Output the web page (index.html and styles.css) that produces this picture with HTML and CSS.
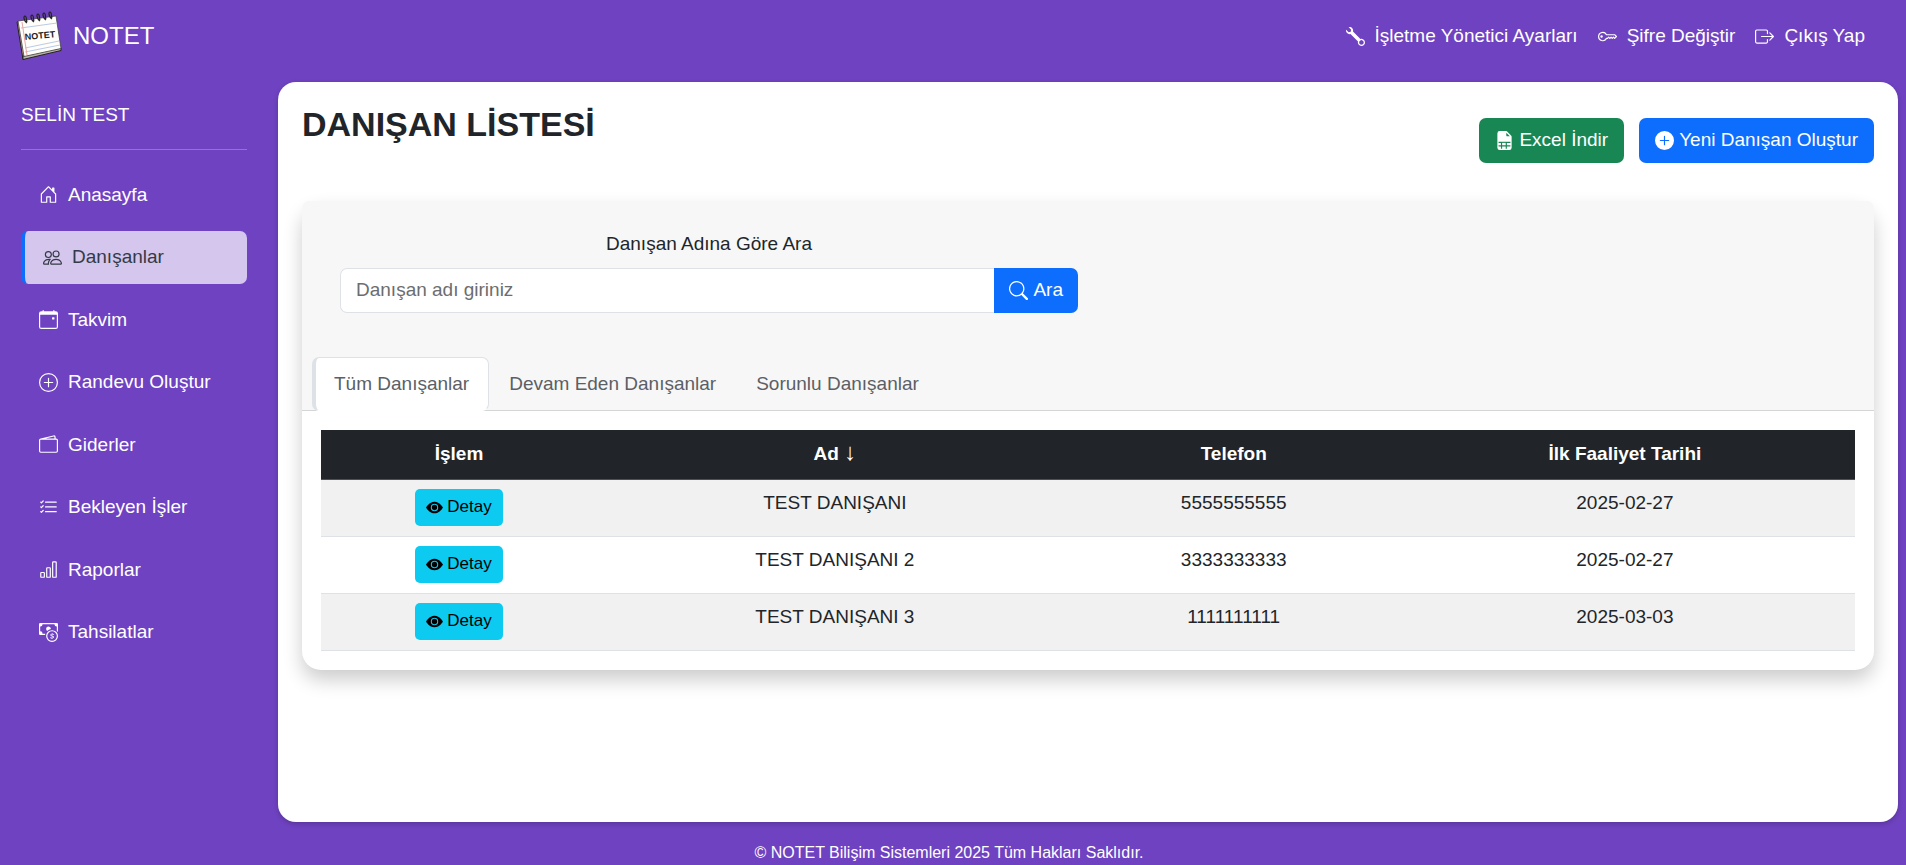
FILE: index.html
```html
<!DOCTYPE html>
<html lang="tr">
<head>
<meta charset="utf-8">
<meta name="viewport" content="width=device-width, initial-scale=1">
<title>NOTET - Danışan Listesi</title>
<link rel="stylesheet" href="styles.css">
</head>
<body>
<svg class="sprite" aria-hidden="true">
  <symbol id="eye" viewBox="0 0 16 16"><path d="M10.5 8a2.500 2.500 0 1 1-5 0 2.500 2.500 0 0 1 5 0"/><path d="M0 8s3-5.500 8-5.500S16 8 16 8s-3 5.500-8 5.500S0 8 0 8m8 3.500a3.500 3.500 0 1 0 0-7 3.500 3.500 0 0 0 0 7"/></symbol>
</svg>
<header class="topbar">
  <a class="brand" href="#">
    <svg class="logo" viewBox="0 0 48 50" aria-hidden="true">
      <path d="M2 11 8 48.500 11 47 6 11z" fill="#c9a08c" stroke="#222" stroke-width="1"/>
      <path d="M8 48.500 46 39.500 46 37 8 45z" fill="#b9b3a6" stroke="#222" stroke-width="1"/>
      <path d="M3 10 41 5 46 37.500 9 45.500z" fill="#fffefa" stroke="#444" stroke-width=".8"/>
      <path d="M6 17 42 12M10 37 44 30M10 41 45 34" stroke="#b9cbe8" stroke-width="1" fill="none"/>
      <path d="M7 11 12 44" stroke="#e7a6a6" stroke-width="1" fill="none"/>
      <path d="M12 11c-3-2-4-7-2-7s1 4 2 6M19 10c-3-2-4-7-2-7s1 4 2 6M25 9c-3-2-4-7-2-7s1 4 2 6M31 8c-3-2-4-7-2-7s1 4 2 6M37 7c-3-2-4-7-2-7s1 4 2 6" transform="translate(0 1)" fill="none" stroke="#222" stroke-width="1.200"/>
      <text class="logo-text" x="10" y="29" transform="rotate(-5 10 29)">NOTET</text>
    </svg>
    <span>NOTET</span>
  </a>
  <nav class="toplinks" aria-label="Hesap">
    <a href="#"><svg class="icon" viewBox="0 0 16 16"><path d="M.102 2.223A3.004 3.004 0 0 0 3.780 5.897l6.341 6.252A3.003 3.003 0 0 0 13 16a3 3 0 1 0-.851-5.878L5.897 3.781A3.004 3.004 0 0 0 2.223.1l2.141 2.142L4 4l-1.757.364zm13.370 9.019.528.026.287.445.445.287.026.529L15 13l-.242.471-.026.529-.445.287-.287.445-.529.026L13 15l-.471-.242-.529-.026-.287-.445-.445-.287-.026-.529L11 13l.242-.471.026-.529.445-.287.287-.445.529-.026L13 11z"/></svg>İşletme Yönetici Ayarları</a>
    <a href="#"><svg class="icon" viewBox="0 0 16 16"><path d="M0 8a4 4 0 0 1 7.465-2H14a.5.5 0 0 1 .354.146l1.500 1.500a.5.5 0 0 1 0 .708l-1.500 1.500a.5.5 0 0 1-.708 0L13 9.207l-.646.647a.5.5 0 0 1-.708 0L11 9.207l-.646.647a.5.5 0 0 1-.708 0L9 9.207l-.646.647A.5.5 0 0 1 8 10h-.535A4 4 0 0 1 0 8m4-3a3 3 0 1 0 2.712 4.285A.5.5 0 0 1 7.163 9h.63l.853-.854a.5.5 0 0 1 .708 0l.646.647.646-.647a.5.5 0 0 1 .708 0l.646.647.646-.647a.5.5 0 0 1 .708 0l.646.647.793-.793-1-1h-6.630a.5.5 0 0 1-.451-.285A3 3 0 0 0 4 5"/><path d="M4 8a1 1 0 1 1-2 0 1 1 0 0 1 2 0"/></svg>Şifre Değiştir</a>
    <a href="#"><svg class="icon" viewBox="0 0 16 16"><path d="M10 12.500a.5.5 0 0 1-.5.5h-8a.5.5 0 0 1-.5-.5v-9a.5.5 0 0 1 .5-.5h8a.5.5 0 0 1 .5.5v2a.5.5 0 0 0 1 0v-2A1.500 1.500 0 0 0 9.500 2h-8A1.500 1.500 0 0 0 0 3.500v9A1.500 1.500 0 0 0 1.500 14h8a1.500 1.500 0 0 0 1.500-1.500v-2a.5.5 0 0 0-1 0z"/><path d="M15.854 8.354a.5.5 0 0 0 0-.708l-3-3a.5.5 0 0 0-.708.708L14.293 7.500H5.500a.5.5 0 0 0 0 1h8.793l-2.147 2.146a.5.5 0 0 0 .708.708z"/></svg>Çıkış Yap</a>
  </nav>
</header>

<div class="layout">
  <aside class="sidebar">
    <div class="user">SELİN TEST</div>
    <nav class="menu" aria-label="Ana menü">
      <a href="#"><svg class="icon" viewBox="0 0 16 16"><path d="M8.354 1.146a.5.5 0 0 0-.708 0l-6 6A.5.5 0 0 0 1.500 7.500v7a.5.5 0 0 0 .5.5h4.500a.5.5 0 0 0 .5-.5v-4h2v4a.5.5 0 0 0 .5.5H14a.5.5 0 0 0 .5-.5v-7a.5.5 0 0 0-.146-.354L13 5.793V2.500a.5.5 0 0 0-.5-.5h-1a.5.5 0 0 0-.5.5v1.293zM2.500 14V7.707l5.500-5.500 5.500 5.500V14H10v-4a.5.5 0 0 0-.5-.5h-3a.5.5 0 0 0-.5.5v4z"/></svg>Anasayfa</a>
      <a class="active" href="#" aria-current="page"><svg class="icon" viewBox="0 0 16 16"><path d="M15 14s1 0 1-1-1-4-5-4-5 3-5 4 1 1 1 1zm-7.978-1L7 12.996c.001-.264.167-1.030.76-1.720C8.312 10.629 9.282 10 11 10c1.717 0 2.687.63 3.240 1.276.593.69.758 1.457.76 1.720l-.008.002-.014.002zM11 7a2 2 0 1 0 0-4 2 2 0 0 0 0 4m3-2a3 3 0 1 1-6 0 3 3 0 0 1 6 0M6.936 9.280a6 6 0 0 0-1.230-.247A7 7 0 0 0 5 9c-4 0-5 3-5 4q0 1 1 1h4.216A2.240 2.240 0 0 1 5 13c0-1.010.377-2.042 1.090-2.904.243-.294.526-.569.846-.816M4.920 10A5.500 5.500 0 0 0 4 13H1c0-.26.164-1.030.76-1.724.545-.636 1.492-1.256 3.160-1.275ZM1.500 5.500a3 3 0 1 1 6 0 3 3 0 0 1-6 0m3-2a2 2 0 1 0 0 4 2 2 0 0 0 0-4"/></svg>Danışanlar</a>
      <a href="#"><svg class="icon" viewBox="0 0 16 16"><path d="M11 6.500a.5.5 0 0 1 .5-.5h1a.5.5 0 0 1 .5.5v1a.5.5 0 0 1-.5.5h-1a.5.5 0 0 1-.5-.5z"/><path d="M3.500 0a.5.5 0 0 1 .5.5V1h8V.5a.5.5 0 0 1 1 0V1h1a2 2 0 0 1 2 2v11a2 2 0 0 1-2 2H2a2 2 0 0 1-2-2V3a2 2 0 0 1 2-2h1V.5a.5.5 0 0 1 .5-.5M1 4v10a1 1 0 0 0 1 1h12a1 1 0 0 0 1-1V4z"/></svg>Takvim</a>
      <a href="#"><svg class="icon" viewBox="0 0 16 16"><path d="M8 15A7 7 0 1 1 8 1a7 7 0 0 1 0 14m0 1A8 8 0 1 0 8 0a8 8 0 0 0 0 16"/><path d="M8 4a.5.5 0 0 1 .5.5v3h3a.5.5 0 0 1 0 1h-3v3a.5.5 0 0 1-1 0v-3h-3a.5.5 0 0 1 0-1h3v-3A.5.5 0 0 1 8 4"/></svg>Randevu Oluştur</a>
      <a href="#"><svg class="icon" viewBox="0 0 16 16"><path d="M12.136.326A1.500 1.500 0 0 1 14 1.780V3h.5A1.500 1.500 0 0 1 16 4.500v9a1.500 1.500 0 0 1-1.500 1.500h-13A1.500 1.500 0 0 1 0 13.500v-9a1.500 1.500 0 0 1 1.432-1.499zM5.562 3H13V1.780a.5.5 0 0 0-.621-.484zM1.500 4a.5.5 0 0 0-.5.5v9a.5.5 0 0 0 .5.5h13a.5.5 0 0 0 .5-.5v-9a.5.5 0 0 0-.5-.5z"/></svg>Giderler</a>
      <a href="#"><svg class="icon" viewBox="0 0 16 16"><path d="M5 11.500a.5.5 0 0 1 .5-.5h9a.5.5 0 0 1 0 1h-9a.5.5 0 0 1-.5-.5m0-4a.5.5 0 0 1 .5-.5h9a.5.5 0 0 1 0 1h-9a.5.5 0 0 1-.5-.5m0-4a.5.5 0 0 1 .5-.5h9a.5.5 0 0 1 0 1h-9a.5.5 0 0 1-.5-.5M3.854 2.146a.5.5 0 0 1 0 .708l-1.500 1.500a.5.5 0 0 1-.708 0l-.5-.5a.5.5 0 1 1 .708-.708L2 3.293l1.146-1.147a.5.5 0 0 1 .708 0m0 4a.5.5 0 0 1 0 .708l-1.500 1.500a.5.5 0 0 1-.708 0l-.5-.5a.5.5 0 1 1 .708-.708L2 7.293l1.146-1.147a.5.5 0 0 1 .708 0m0 4a.5.5 0 0 1 0 .708l-1.500 1.500a.5.5 0 0 1-.708 0l-.5-.5a.5.5 0 0 1 .708-.708l.146.147 1.146-1.147a.5.5 0 0 1 .708 0"/></svg>Bekleyen İşler</a>
      <a href="#"><svg class="icon" viewBox="0 0 16 16"><path d="M4 11H2v3h2zm5-4H7v7h2zm5-5v12h-2V2zm-2-1a1 1 0 0 0-1 1v12a1 1 0 0 0 1 1h2a1 1 0 0 0 1-1V2a1 1 0 0 0-1-1zM6 7a1 1 0 0 1 1-1h2a1 1 0 0 1 1 1v7a1 1 0 0 1-1 1H7a1 1 0 0 1-1-1zm-5 4a1 1 0 0 1 1-1h2a1 1 0 0 1 1 1v3a1 1 0 0 1-1 1H2a1 1 0 0 1-1-1z"/></svg>Raporlar</a>
      <a href="#"><svg class="icon" viewBox="0 0 16 16"><path fill-rule="evenodd" d="M11 15a4 4 0 1 0 0-8 4 4 0 0 0 0 8m5-4a5 5 0 1 1-10 0 5 5 0 0 1 10 0"/><path d="M9.438 11.944c.047.596.518 1.060 1.363 1.116v.44h.375v-.443c.875-.061 1.386-.529 1.386-1.207 0-.618-.39-.936-1.090-1.100l-.296-.07v-1.200c.376.043.614.248.671.532h.658c-.047-.575-.54-1.024-1.329-1.073V8.500h-.375v.45c-.747.073-1.255.522-1.255 1.158 0 .562.378.92 1.007 1.066l.248.061v1.272c-.384-.058-.639-.27-.696-.563h-.668zm1.360-1.354c-.369-.085-.569-.26-.569-.522 0-.294.216-.514.572-.578v1.100zm.432.746c.449.104.655.272.655.569 0 .339-.257.571-.709.614v-1.195z"/><path d="M1 0a1 1 0 0 0-1 1v8a1 1 0 0 0 1 1h4.083q.088-.517.258-1H3a2 2 0 0 0-2-2V3a2 2 0 0 0 2-2h10a2 2 0 0 0 2 2v3.528c.38.34.717.728 1 1.154V1a1 1 0 0 0-1-1z"/><path d="M9.998 5.083 10 5a2 2 0 1 0-3.132 1.650 6 6 0 0 1 3.130-1.567"/></svg>Tahsilatlar</a>
    </nav>
  </aside>

  <main class="content">
    <div class="page-head">
      <h1>DANIŞAN LİSTESİ</h1>
      <div class="actions">
        <button class="btn btn-success" type="button"><svg class="icon" viewBox="0 0 16 16"><path d="M6 12v-2h3v2z"/><path d="M9.293 0H4a2 2 0 0 0-2 2v12a2 2 0 0 0 2 2h8a2 2 0 0 0 2-2V4.707A1 1 0 0 0 13.707 4L10 .293A1 1 0 0 0 9.293 0M9.500 3.500v-2l3 3h-2a1 1 0 0 1-1-1M3 9h10v1h-3v2h3v1h-3v2H9v-2H6v2H5v-2H3v-1h2v-2H3z"/></svg>Excel İndir</button>
        <button class="btn btn-primary" type="button"><svg class="icon" viewBox="0 0 16 16"><path d="M16 8A8 8 0 1 1 0 8a8 8 0 0 1 16 0M8.500 4.500a.5.5 0 0 0-1 0v3h-3a.5.5 0 0 0 0 1h3v3a.5.5 0 0 0 1 0v-3h3a.5.5 0 0 0 0-1h-3z"/></svg>Yeni Danışan Oluştur</button>
      </div>
    </div>

    <section class="card">
      <div class="card-header">
        <form class="search">
          <label for="q">Danışan Adına Göre Ara</label>
          <div class="input-group">
            <input id="q" type="text" placeholder="Danışan adı giriniz">
            <button class="btn btn-primary" type="button"><svg class="icon" viewBox="0 0 16 16"><path d="M11.742 10.344a6.500 6.500 0 1 0-1.397 1.398h-.001q.044.06.098.115l3.850 3.850a1 1 0 0 0 1.415-1.414l-3.850-3.850a1 1 0 0 0-.115-.1zM12 6.500a5.500 5.500 0 1 1-11 0 5.500 5.500 0 0 1 11 0"/></svg>Ara</button>
          </div>
        </form>
        <div class="tabs" role="tablist">
          <button class="tab active" type="button" role="tab" aria-selected="true">Tüm Danışanlar</button>
          <button class="tab" type="button" role="tab" aria-selected="false">Devam Eden Danışanlar</button>
          <button class="tab" type="button" role="tab" aria-selected="false">Sorunlu Danışanlar</button>
        </div>
      </div>
      <div class="card-body">
        <table>
          <colgroup><col class="col-action"><col class="col-name"><col class="col-phone"><col></colgroup>
          <thead>
            <tr><th scope="col">İşlem</th><th scope="col">Ad <span class="sort">↓</span></th><th scope="col">Telefon</th><th scope="col">İlk Faaliyet Tarihi</th></tr>
          </thead>
          <tbody>
            <tr><td><button class="btn btn-info" type="button"><svg class="icon"><use href="#eye"/></svg>Detay</button></td><td>TEST DANIŞANI</td><td>5555555555</td><td>2025-02-27</td></tr>
            <tr><td><button class="btn btn-info" type="button"><svg class="icon"><use href="#eye"/></svg>Detay</button></td><td>TEST DANIŞANI 2</td><td>3333333333</td><td>2025-02-27</td></tr>
            <tr><td><button class="btn btn-info" type="button"><svg class="icon"><use href="#eye"/></svg>Detay</button></td><td>TEST DANIŞANI 3</td><td>1111111111</td><td>2025-03-03</td></tr>
          </tbody>
        </table>
      </div>
    </section>
  </main>
</div>

<footer class="footer">© NOTET Bilişim Sistemleri 2025 Tüm Hakları Saklıdır.</footer>
</body>
</html>
```
FILE: styles.css
```css
*,
*::before,
*::after {
  box-sizing: border-box;
}

body {
  margin: 0;
  min-height: 100vh;
  display: flex;
  flex-direction: column;
  background: #6f42c1;
  color: #212529;
  font: 19px/1.5 "Liberation Sans", Arial, sans-serif;
}

a {
  color: inherit;
  text-decoration: none;
}

button,
input {
  font: inherit;
}

.sprite {
  position: absolute;
  width: 0;
  height: 0;
}

.icon {
  width: 1em;
  height: 1em;
  flex: none;
  fill: currentColor;
}

/* Top bar */
.topbar {
  display: flex;
  align-items: center;
  justify-content: space-between;
  padding: 11px 41px 21px 15px;
  color: #fff;
}

.brand {
  display: flex;
  align-items: center;
  gap: 10px;
  font-size: 24px;
}

.logo {
  width: 48px;
  height: 50px;
}

.logo-text {
  font: bold 9px "Liberation Sans", Arial, sans-serif;
  fill: #222;
}

.toplinks {
  display: flex;
  gap: 20px;
}

.toplinks a {
  display: flex;
  align-items: center;
  gap: 10px;
}

/* Layout */
.layout {
  flex: 1;
  display: flex;
}

.sidebar {
  width: 278px;
  flex: none;
  padding: 19px 31px 0 21px;
  color: #fff;
}

.user {
  padding-bottom: 19px;
  margin-bottom: 19px;
  border-bottom: 1px solid #9471d6;
}

.menu {
  display: flex;
  flex-direction: column;
  gap: 10px;
}

.menu a {
  display: flex;
  align-items: center;
  gap: 10px;
  padding: 12px 18px;
  border-radius: 7px;
}

.menu .active {
  background: #d4c6ec;
  border-left: 4px solid #0d6efd;
  color: #343a46;
}

.content {
  flex: 1;
  margin-right: 8px;
  padding: 17px 24px 24px;
  background: #fff;
  border-radius: 18px;
  box-shadow: 0 2px 5px rgba(0, 0, 0, 0.2);
}

.page-head {
  display: flex;
  justify-content: space-between;
  align-items: flex-start;
  margin-bottom: 38px;
}

h1 {
  margin: 0;
  font-size: 34px;
  line-height: 50px;
}

.actions {
  display: flex;
  gap: 15px;
  padding-top: 19px;
}

/* Buttons */
.btn {
  display: inline-flex;
  align-items: center;
  justify-content: center;
  gap: 5px;
  height: 45px;
  padding: 0 16px;
  border: 0;
  border-radius: 7px;
  color: #fff;
  cursor: pointer;
}

.btn-success {
  background: #198754;
}

.btn-primary {
  background: #0d6efd;
}

.btn-info {
  gap: 4px;
  height: 37px;
  padding: 0 11px;
  border-radius: 5px;
  background: #0dcaf0;
  color: #000;
  font-size: 17px;
  vertical-align: top;
}

/* Card */
.card {
  background: #fff;
  border-radius: 19px;
  box-shadow: 0 10px 19px rgba(0, 0, 0, 0.2);
}

.card-header {
  padding: 29px 10px 0;
  background: #f7f7f7;
  border-bottom: 1px solid #d4d5d7;
  border-radius: 7px 7px 0 0;
}

.search {
  width: calc(50% - 10px);
  padding-left: 28px;
  margin-bottom: 44px;
}

.search label {
  display: block;
  margin-bottom: 9px;
  text-align: center;
}

.input-group {
  display: flex;
}

.input-group input {
  flex: 1;
  min-width: 0;
  height: 45px;
  padding: 0 15px;
  border: 1px solid #dee2e6;
  border-right: 0;
  border-radius: 7px 0 0 7px;
  background: #fff;
  color: #212529;
}

.input-group input::placeholder {
  color: #6c6d6f;
  opacity: 1;
}

.input-group .btn {
  padding: 0 15px;
  border-radius: 0 7px 7px 0;
}

.tabs {
  display: flex;
  margin-bottom: -1px;
}

.tab {
  padding: 12px 19px;
  border: 1px solid transparent;
  border-radius: 7px;
  background: none;
  color: #5b5f66;
  line-height: 1.5;
  cursor: pointer;
}

.tab.active {
  padding-left: 18px;
  background: #fff;
  border-color: #dee2e6 #dee2e6 #fff;
  border-left-width: 4px;
}

.card-body {
  padding: 19px;
}

table {
  width: 100%;
  border-collapse: collapse;
  text-align: center;
}

.col-action {
  width: 18%;
}

.col-name {
  width: 31%;
}

.col-phone {
  width: 21%;
}

th,
td {
  padding: 10px;
  vertical-align: top;
  border-bottom: 1px solid #dee2e6;
}

td {
  padding-top: 9px;
}

th {
  background: #212529;
  border-color: #4d5154;
  color: #fff;
}

.sort {
  font-size: 24px;
  font-weight: normal;
  line-height: 1;
}

tbody tr:nth-child(odd) {
  background: #f1f1f1;
}

.footer {
  padding: 19px 8px 0 0;
  text-align: center;
  color: #fff;
  font-size: 16px;
}
```
